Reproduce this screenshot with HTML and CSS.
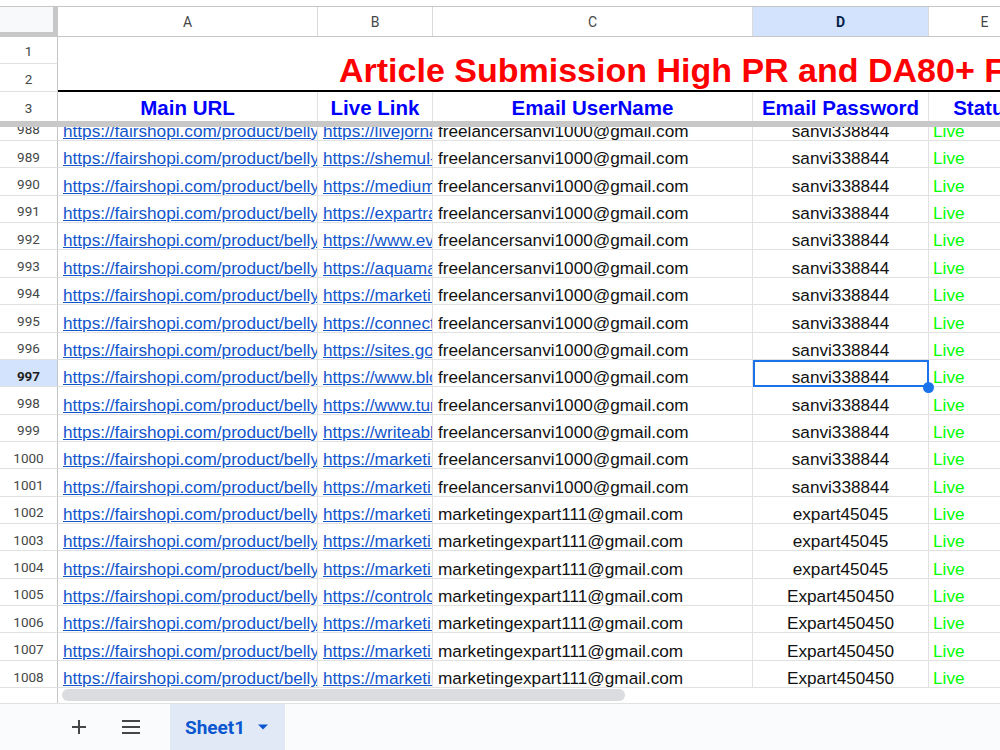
FILE: index.html
```html
<!DOCTYPE html>
<html lang="en">
<head>
<title>Article Submission - Sheet1</title>
<meta charset="utf-8">
<link rel="stylesheet" href="styles.css">
</head>
<body>
<div class="sheet">
  <div class="top-gap"></div>

  <!-- column letters -->
  <div class="col-head">
    <div class="corner"></div>
    <div class="ch col-a">A</div>
    <div class="ch col-b">B</div>
    <div class="ch col-c">C</div>
    <div class="ch col-d active">D</div>
    <div class="ch col-e">E</div>
  </div>

  <!-- frozen rows 1-3 -->
  <div class="frozen">
    <div class="rh-col">
      <div class="rh r1">1</div>
      <div class="rh r2">2</div>
      <div class="rh r3">3</div>
    </div>
    <div class="frozen-data">
      <div class="title">Article Submission High PR and DA80+ Free Sites List</div>
      <div class="hdr-row">
        <div class="hd col-a">Main URL</div>
        <div class="hd col-b">Live Link</div>
        <div class="hd col-c">Email UserName</div>
        <div class="hd col-d">Email Password</div>
        <div class="hd col-e">Status</div>
      </div>
    </div>
  </div>
  <div class="divider"></div>

  <!-- scrolled rows -->
  <div class="body">
    <div class="rows">
      <div class="row"><div class="rh">988</div><div class="cell col-a"><a href="#">https://fairshopi.com/product/belly-button-ring</a></div><div class="cell col-b"><a href="#">https://livejornal.com</a></div><div class="cell col-c">freelancersanvi1000@gmail.com</div><div class="cell col-d mid">sanvi338844</div><div class="cell col-e live">Live</div></div>
      <div class="row"><div class="rh">989</div><div class="cell col-a"><a href="#">https://fairshopi.com/product/belly-button-ring</a></div><div class="cell col-b"><a href="#">https://shemul-blog.com</a></div><div class="cell col-c">freelancersanvi1000@gmail.com</div><div class="cell col-d mid">sanvi338844</div><div class="cell col-e live">Live</div></div>
      <div class="row"><div class="rh">990</div><div class="cell col-a"><a href="#">https://fairshopi.com/product/belly-button-ring</a></div><div class="cell col-b"><a href="#">https://medium.com</a></div><div class="cell col-c">freelancersanvi1000@gmail.com</div><div class="cell col-d mid">sanvi338844</div><div class="cell col-e live">Live</div></div>
      <div class="row"><div class="rh">991</div><div class="cell col-a"><a href="#">https://fairshopi.com/product/belly-button-ring</a></div><div class="cell col-b"><a href="#">https://expartrank.com</a></div><div class="cell col-c">freelancersanvi1000@gmail.com</div><div class="cell col-d mid">sanvi338844</div><div class="cell col-e live">Live</div></div>
      <div class="row"><div class="rh">992</div><div class="cell col-a"><a href="#">https://fairshopi.com/product/belly-button-ring</a></div><div class="cell col-b"><a href="#">https://www.evernote.com</a></div><div class="cell col-c">freelancersanvi1000@gmail.com</div><div class="cell col-d mid">sanvi338844</div><div class="cell col-e live">Live</div></div>
      <div class="row"><div class="rh">993</div><div class="cell col-a"><a href="#">https://fairshopi.com/product/belly-button-ring</a></div><div class="cell col-b"><a href="#">https://aquamarine.com</a></div><div class="cell col-c">freelancersanvi1000@gmail.com</div><div class="cell col-d mid">sanvi338844</div><div class="cell col-e live">Live</div></div>
      <div class="row"><div class="rh">994</div><div class="cell col-a"><a href="#">https://fairshopi.com/product/belly-button-ring</a></div><div class="cell col-b"><a href="#">https://marketingexpart.com</a></div><div class="cell col-c">freelancersanvi1000@gmail.com</div><div class="cell col-d mid">sanvi338844</div><div class="cell col-e live">Live</div></div>
      <div class="row"><div class="rh">995</div><div class="cell col-a"><a href="#">https://fairshopi.com/product/belly-button-ring</a></div><div class="cell col-b"><a href="#">https://connect.com</a></div><div class="cell col-c">freelancersanvi1000@gmail.com</div><div class="cell col-d mid">sanvi338844</div><div class="cell col-e live">Live</div></div>
      <div class="row"><div class="rh">996</div><div class="cell col-a"><a href="#">https://fairshopi.com/product/belly-button-ring</a></div><div class="cell col-b"><a href="#">https://sites.google.com</a></div><div class="cell col-c">freelancersanvi1000@gmail.com</div><div class="cell col-d mid">sanvi338844</div><div class="cell col-e live">Live</div></div>
      <div class="row"><div class="rh cur">997</div><div class="cell col-a"><a href="#">https://fairshopi.com/product/belly-button-ring</a></div><div class="cell col-b"><a href="#">https://www.blogger.com</a></div><div class="cell col-c">freelancersanvi1000@gmail.com</div><div class="cell col-d mid sel">sanvi338844<span class="handle"></span></div><div class="cell col-e live">Live</div></div>
      <div class="row"><div class="rh">998</div><div class="cell col-a"><a href="#">https://fairshopi.com/product/belly-button-ring</a></div><div class="cell col-b"><a href="#">https://www.tumblr.com</a></div><div class="cell col-c">freelancersanvi1000@gmail.com</div><div class="cell col-d mid">sanvi338844</div><div class="cell col-e live">Live</div></div>
      <div class="row"><div class="rh">999</div><div class="cell col-a"><a href="#">https://fairshopi.com/product/belly-button-ring</a></div><div class="cell col-b"><a href="#">https://writeablog.net</a></div><div class="cell col-c">freelancersanvi1000@gmail.com</div><div class="cell col-d mid">sanvi338844</div><div class="cell col-e live">Live</div></div>
      <div class="row"><div class="rh">1000</div><div class="cell col-a"><a href="#">https://fairshopi.com/product/belly-button-ring</a></div><div class="cell col-b"><a href="#">https://marketingexpart.com</a></div><div class="cell col-c">freelancersanvi1000@gmail.com</div><div class="cell col-d mid">sanvi338844</div><div class="cell col-e live">Live</div></div>
      <div class="row"><div class="rh">1001</div><div class="cell col-a"><a href="#">https://fairshopi.com/product/belly-button-ring</a></div><div class="cell col-b"><a href="#">https://marketingexpart.com</a></div><div class="cell col-c">freelancersanvi1000@gmail.com</div><div class="cell col-d mid">sanvi338844</div><div class="cell col-e live">Live</div></div>
      <div class="row"><div class="rh">1002</div><div class="cell col-a"><a href="#">https://fairshopi.com/product/belly-button-ring</a></div><div class="cell col-b"><a href="#">https://marketingexpart.com</a></div><div class="cell col-c">marketingexpart111@gmail.com</div><div class="cell col-d mid">expart45045</div><div class="cell col-e live">Live</div></div>
      <div class="row"><div class="rh">1003</div><div class="cell col-a"><a href="#">https://fairshopi.com/product/belly-button-ring</a></div><div class="cell col-b"><a href="#">https://marketingexpart.com</a></div><div class="cell col-c">marketingexpart111@gmail.com</div><div class="cell col-d mid">expart45045</div><div class="cell col-e live">Live</div></div>
      <div class="row"><div class="rh">1004</div><div class="cell col-a"><a href="#">https://fairshopi.com/product/belly-button-ring</a></div><div class="cell col-b"><a href="#">https://marketingexpart.com</a></div><div class="cell col-c">marketingexpart111@gmail.com</div><div class="cell col-d mid">expart45045</div><div class="cell col-e live">Live</div></div>
      <div class="row"><div class="rh">1005</div><div class="cell col-a"><a href="#">https://fairshopi.com/product/belly-button-ring</a></div><div class="cell col-b"><a href="#">https://controlc.com</a></div><div class="cell col-c">marketingexpart111@gmail.com</div><div class="cell col-d mid">Expart450450</div><div class="cell col-e live">Live</div></div>
      <div class="row"><div class="rh">1006</div><div class="cell col-a"><a href="#">https://fairshopi.com/product/belly-button-ring</a></div><div class="cell col-b"><a href="#">https://marketingexpart.com</a></div><div class="cell col-c">marketingexpart111@gmail.com</div><div class="cell col-d mid">Expart450450</div><div class="cell col-e live">Live</div></div>
      <div class="row"><div class="rh">1007</div><div class="cell col-a"><a href="#">https://fairshopi.com/product/belly-button-ring</a></div><div class="cell col-b"><a href="#">https://marketingexpart.com</a></div><div class="cell col-c">marketingexpart111@gmail.com</div><div class="cell col-d mid">Expart450450</div><div class="cell col-e live">Live</div></div>
      <div class="row"><div class="rh">1008</div><div class="cell col-a"><a href="#">https://fairshopi.com/product/belly-button-ring</a></div><div class="cell col-b"><a href="#">https://marketingexpart.com</a></div><div class="cell col-c">marketingexpart111@gmail.com</div><div class="cell col-d mid">Expart450450</div><div class="cell col-e live">Live</div></div>
    </div>
  </div>

  <!-- horizontal scrollbar -->
  <div class="scroll-row">
    <div class="scroll-gap"></div>
    <div class="scroll-track"><div class="thumb"></div></div>
  </div>

  <!-- sheet tabs -->
  <div class="tabs">
    <button class="tab-btn" title="Add sheet">
      <svg width="16" height="16" viewBox="0 0 16 16"><path d="M8 1v14M1 8h14" stroke="#444746" stroke-width="2" fill="none"/></svg>
    </button>
    <button class="tab-btn" title="All sheets">
      <svg width="20" height="16" viewBox="0 0 20 16"><path d="M1 2h18M1 8h18M1 14h18" stroke="#444746" stroke-width="2" fill="none"/></svg>
    </button>
    <div class="tab">
      <span>Sheet1</span>
      <svg width="12" height="8" viewBox="0 0 12 8"><path d="M1 1.5h10L6 6.5z" fill="#0b57d0"/></svg>
    </div>
  </div>
</div>
</body>
</html>
```

FILE: styles.css
```css
* { margin: 0; padding: 0; box-sizing: border-box; }
html, body { width: 1000px; height: 750px; overflow: hidden; background: #fff; }
body { font-family: "Liberation Sans", Arial, sans-serif; color: #111; }
a { color: #1155cc; text-decoration: underline; }
button { border: 0; background: transparent; cursor: pointer; }

.sheet { width: 1000px; height: 750px; display: flex; flex-direction: column; overflow: hidden; }
.top-gap { height: 7px; border-bottom: 1px solid #c4c7c5; flex: none; }

/* widths shared by every row */
.col-a { width: 260px; }
.col-b { width: 115px; }
.col-c { width: 320px; }
.col-d { width: 176px; }
.col-e { width: 112px; }
.col-a, .col-b, .col-c, .col-d, .col-e { flex: none; }

/* column letters */
.col-head { display: flex; height: 30px; border-bottom: 1px solid #c4c7c5; flex: none; }
.corner { width: 58px; flex: none; background: #f8f9fa; border-right: 5px solid #c7c7c7; border-bottom: 4px solid #c7c7c7; }
.ch { display: flex; align-items: center; justify-content: center; border-right: 1px solid #dadada; font-family: Roboto, "Liberation Sans", sans-serif; font-size: 14px; color: #444746; }
.ch.active { background: #d3e3fd; color: #041e49; font-weight: 700; }

/* row numbers */
.rh-col { width: 58px; flex: none; }
.rh { width: 58px; flex: none; display: flex; align-items: center; justify-content: center; padding-top: 2px; border-right: 1px solid #c4c7c5; border-bottom: 1px solid #e1e1e1; font-family: Roboto, "Liberation Sans", sans-serif; font-size: 13.5px; color: #444746; }
.row .rh { padding-top: 5px; }
.rh.cur { background: #d3e3fd; color: #1f1f1f; font-weight: 700; }
.rh.r1 { height: 27px; }
.rh.r2 { height: 28px; }
.rh.r3 { height: 29px; border-bottom: 0; }

/* frozen title + header row */
.frozen { display: flex; height: 84px; flex: none; }
.frozen-data { flex: 1; min-width: 0; }
.title { height: 55px; border-bottom: 2px solid #000; display: flex; align-items: flex-end; padding-left: 281px; white-space: nowrap; overflow: hidden; font-size: 34px; font-weight: 700; line-height: 1.15; color: #ff0000; }
.hdr-row { display: flex; height: 29px; }
.hd { display: flex; align-items: flex-end; justify-content: center; padding-bottom: 1px; border-right: 1px solid #e1e1e1; white-space: nowrap; font-size: 20.5px; font-weight: 700; color: #0000ff; }
.divider { height: 6px; background: #c8c8c8; flex: none; }

/* data rows */
.body { height: 561px; overflow: hidden; flex: none; }
.rows { margin-top: -13.37px; }
.row { display: flex; height: 27.37px; }
.row .rh { height: 27.37px; }
.cell { display: flex; align-items: flex-end; padding: 0 5px 1px; border-right: 1px solid #e1e1e1; border-bottom: 1px solid #e1e1e1; white-space: nowrap; overflow: hidden; font-size: 17.2px; line-height: 16px; }
.cell.mid { justify-content: center; }
.cell.live { color: #00ff00; padding-left: 4px; }
.cell.sel { position: relative; overflow: visible; }
.cell.sel::after { content: ""; position: absolute; top: 0; left: 0; right: -1px; bottom: -1px; border: 2px solid #1a73e8; }
.handle { position: absolute; right: -6px; bottom: -7px; width: 11px; height: 11px; border-radius: 50%; background: #1a73e8; z-index: 2; }

/* horizontal scrollbar */
.scroll-row { display: flex; height: 15px; flex: none; }
.scroll-gap { width: 58px; border-right: 1px solid #c4c7c5; flex: none; }
.scroll-track { flex: 1; padding: 1px 0 2px 4px; }
.thumb { width: 563px; height: 12px; border-radius: 6px; background: #dadce0; }

/* sheet tabs */
.tabs { height: 47px; flex: none; display: flex; align-items: stretch; border-top: 1px solid #e1e1e1; background: #f9fbfd; padding-left: 53px; }
.tab-btn { width: 52px; display: flex; align-items: center; justify-content: center; }
.tab { margin-left: 13px; width: 115px; display: flex; align-items: center; gap: 12px; padding-left: 15px; background: #e1e9f7; font-family: Roboto, "Liberation Sans", sans-serif; font-size: 19px; font-weight: 700; color: #0b57d0; }
```
